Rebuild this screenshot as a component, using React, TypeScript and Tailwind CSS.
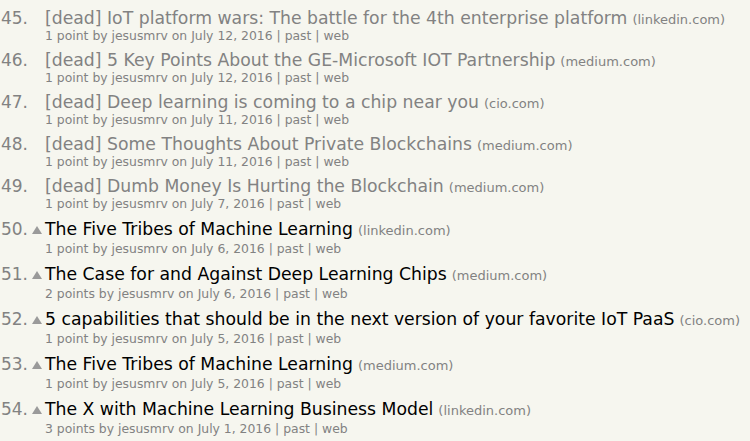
import React from "react";

type Story = {
  rank: number;
  title: string;
  site: string;
  points: number;
  date: string;
  dead?: boolean;
};

const stories: Story[] = [
  { rank: 45, title: "IoT platform wars: The battle for the 4th enterprise platform", site: "linkedin.com", points: 1, date: "July 12, 2016", dead: true },
  { rank: 46, title: "5 Key Points About the GE-Microsoft IOT Partnership", site: "medium.com", points: 1, date: "July 12, 2016", dead: true },
  { rank: 47, title: "Deep learning is coming to a chip near you", site: "cio.com", points: 1, date: "July 11, 2016", dead: true },
  { rank: 48, title: "Some Thoughts About Private Blockchains", site: "medium.com", points: 1, date: "July 11, 2016", dead: true },
  { rank: 49, title: "Dumb Money Is Hurting the Blockchain", site: "medium.com", points: 1, date: "July 7, 2016", dead: true },
  { rank: 50, title: "The Five Tribes of Machine Learning", site: "linkedin.com", points: 1, date: "July 6, 2016" },
  { rank: 51, title: "The Case for and Against Deep Learning Chips", site: "medium.com", points: 2, date: "July 6, 2016" },
  { rank: 52, title: "5 capabilities that should be in the next version of your favorite IoT PaaS", site: "cio.com", points: 1, date: "July 5, 2016" },
  { rank: 53, title: "The Five Tribes of Machine Learning", site: "medium.com", points: 1, date: "July 5, 2016" },
  { rank: 54, title: "The X with Machine Learning Business Model", site: "linkedin.com", points: 3, date: "July 1, 2016" },
];

const VoteArrow = () => (
  <svg width="10" height="10" viewBox="0 0 10 10" className="block">
    <polygon points="5,1 10,9 0,9" fill="#9a9a9a" />
  </svg>
);

const StoryRow = ({ story }: { story: Story }) => {
  const live = !story.dead;
  return (
    <div className="pb-[8px]">
      <div className={`flex items-center whitespace-nowrap ${live ? "h-[24px]" : "h-[22px]"}`}>
        <span className="w-[28px] text-right text-[17px] text-[#828282]">{story.rank}.</span>
        <span className="w-[17px] flex justify-center">{live && <VoteArrow />}</span>
        <span className={`text-[17.25px] ${live ? "text-black" : "text-[#828282]"}`}>
          {story.dead && "[dead] "}
          {story.title}
        </span>
        <span className="ml-[5px] text-[13px] text-[#828282] pt-[2px]">({story.site})</span>
      </div>
      <div className={`pl-[45px] text-[12.4px] leading-[12px] h-[12px] text-[#828282] whitespace-nowrap ${live ? "mt-[1px]" : ""}`}>
        {story.points} {story.points === 1 ? "point" : "points"} by jesusmrv on {story.date} | past | web
      </div>
    </div>
  );
};

export default function App() {
  return (
    <div
      className="w-[750px] h-[441px] overflow-hidden bg-[#f6f6ef] pt-[8px]"
      style={{ fontFamily: '"DejaVu Sans", Verdana, sans-serif' }}
    >
      {stories.map((s) => (
        <StoryRow key={s.rank} story={s} />
      ))}
    </div>
  );
}
